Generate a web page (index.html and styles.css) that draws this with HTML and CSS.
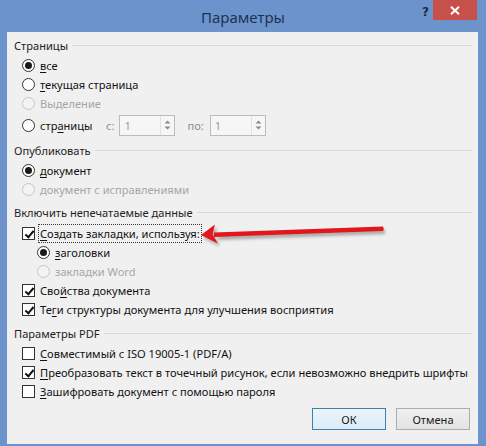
FILE: index.html
```html
<!DOCTYPE html>
<html lang="ru">
<head>
<meta charset="utf-8">
<title>Параметры</title>
<link rel="stylesheet" href="styles.css">
</head>
<body>
<div class="window">
  <div class="titlebar">
    <span class="title">Параметры</span>
    <div class="controls">
      <span class="help">?</span>
      <span class="close"><svg width="10" height="9" viewBox="0 0 10 9"><path d="M1 0.8 L9 8.2 M9 0.8 L1 8.2" stroke="#fff" stroke-width="2" fill="none"/></svg></span>
    </div>
  </div>
  <div class="content">
    <section class="group">
      <div class="group-head"><span>Страницы</span></div>
      <div class="rows">
        <div class="row"><span class="radio on"></span><span><u>в</u>се</span></div>
        <div class="row"><span class="radio"></span><span><u>т</u>екущая страница</span></div>
        <div class="row disabled"><span class="radio"></span><span>Выделение</span></div>
        <div class="row spin-row"><span class="radio"></span><span class="pages-label">стр<u>а</u>ницы</span>
          <span class="spin-label from">с:</span>
          <span class="spin"><span class="val">1</span><span class="arrows"><svg width="7" height="12" viewBox="0 0 7 12"><path d="M0.5 4.5 L3.5 1.5 L6.5 4.5Z M0.5 7.5 L3.5 10.5 L6.5 7.5Z" fill="#8a8a8a"/></svg></span></span>
          <span class="spin-label to">по:</span>
          <span class="spin"><span class="val">1</span><span class="arrows"><svg width="7" height="12" viewBox="0 0 7 12"><path d="M0.5 4.5 L3.5 1.5 L6.5 4.5Z M0.5 7.5 L3.5 10.5 L6.5 7.5Z" fill="#8a8a8a"/></svg></span></span>
        </div>
      </div>
    </section>
    <section class="group g2">
      <div class="group-head"><span>Опубликовать</span></div>
      <div class="rows">
        <div class="row"><span class="radio on"></span><span><u>д</u>окумент</span></div>
        <div class="row disabled"><span class="radio"></span><span>документ с исправлениями</span></div>
      </div>
    </section>
    <section class="group g3">
      <div class="group-head"><span>Включить непечатаемые данные</span></div>
      <div class="rows">
        <div class="row"><span class="check on"></span><span class="focus"><u>С</u>оздать закладки, используя:</span></div>
        <div class="row sub"><span class="radio on"></span><span><u>з</u>аголовки</span></div>
        <div class="row sub disabled"><span class="radio"></span><span>закладки Word</span></div>
        <div class="row"><span class="check on"></span><span>Сво<u>й</u>ства документа</span></div>
        <div class="row"><span class="check on"></span><span>Те<u>г</u>и структуры документа для улучшения восприятия</span></div>
      </div>
    </section>
    <section class="group g4">
      <div class="group-head"><span>Параметры PDF</span></div>
      <div class="rows">
        <div class="row"><span class="check"></span><span><u>С</u>овместимый с ISO 19005-1 (PDF/A)</span></div>
        <div class="row"><span class="check on"></span><span><u>П</u>реобразовать текст в точечный рисунок, если невозможно внедрить шрифты</span></div>
        <div class="row"><span class="check"></span><span><u>З</u>ашифровать документ с помощью пароля</span></div>
      </div>
    </section>
    <div class="buttons">
      <button class="btn default">ОК</button>
      <button class="btn">Отмена</button>
    </div>
  </div>
  <svg class="arrow" width="486" height="446" viewBox="0 0 486 446">
    <defs>
      <filter id="blur" x="-10%" y="-50%" width="120%" height="200%"><feGaussianBlur stdDeviation="1.6"/></filter>
    </defs>
    <g transform="translate(2,3)" fill="#6e6e6e" opacity="0.55" filter="url(#blur)">
      <path d="M383 226.5 L383 231 L216 237 L216 232.5Z"/>
      <path d="M201 235 L215 224.5 L213 234.5 L218 243.5Z"/>
    </g>
    <g fill="#e3161c">
      <path d="M383 226.5 Q384.5 228.7 383 231 L214 237 L214 232.5Z"/>
      <path d="M201 235 L215 224.5 L212.5 234.5 L218 243.5Z"/>
    </g>
  </svg>
</div>
</body>
</html>
```

FILE: styles.css
```css
* { box-sizing: border-box; }
html, body { margin: 0; padding: 0; }
body {
  width: 486px;
  height: 446px;
  overflow: hidden;
  font-family: "Noto Sans", "Open Sans", sans-serif;
  font-size: 11.1px;
  color: #121212;
}
.window {
  position: relative;
  width: 486px;
  height: 446px;
  background: #6d93cd;
  display: flex;
  flex-direction: column;
}
.titlebar {
  height: 32px;
  display: grid;
  grid-template-columns: 1fr auto 1fr;
  align-items: start;
}
.title {
  grid-column: 2;
  font-size: 15px;
  color: #1f3350;
  line-height: 32px;
  padding-top: 1px;
}
.controls {
  grid-column: 3;
  justify-self: end;
  display: flex;
  align-items: flex-start;
  padding-right: 9px;
}
.help {
  font-family: "DejaVu Sans", sans-serif;
  font-weight: bold;
  font-size: 12px;
  color: #1c2c48;
  line-height: 12px;
  margin-top: 6px;
  margin-right: 4px;
}
.close {
  width: 44px;
  height: 20px;
  background: #c7504b;
  display: flex;
  align-items: center;
  justify-content: center;
}
.content {
  flex: 1;
  margin: 0 8px 2px 7px;
  background: #f0f0f0;
  padding: 4px 6px 0 7px;
  display: flex;
  flex-direction: column;
}
.group-head {
  height: 19px;
  display: flex;
  align-items: center;
  color: #1e1e1e;
}
.group-head::after {
  content: "";
  flex: 1;
  height: 1px;
  background: #dadada;
  margin-left: 4px;
  margin-top: -1px;
}
.rows {
  display: flex;
  flex-direction: column;
  margin-top: 1px;
  padding-left: 8px;
}
.g2 { margin-top: 4px; }
.g3 { margin-top: 4px; }
.g3 .rows { margin-top: 2px; }
.g4 { margin-top: 5px; }
.row {
  height: 19px;
  display: flex;
  align-items: center;
  white-space: nowrap;
}
.row u { text-decoration: underline; text-underline-offset: 2px; }
.row.sub { padding-left: 15px; }
.row.disabled { color: #a6a6a6; }
.radio {
  width: 13px;
  height: 13px;
  border-radius: 50%;
  border: 1px solid #333;
  background: #fff;
  margin-right: 5px;
  flex: none;
  display: flex;
  align-items: center;
  justify-content: center;
}
.radio.on::after {
  content: "";
  width: 7px;
  height: 7px;
  border-radius: 50%;
  background: #1a1a1a;
}
.disabled .radio {
  border-color: #c6c6c6;
  background: #f3f3f3;
}
.check {
  width: 13px;
  height: 13px;
  border: 1px solid #333;
  background: #fff;
  margin-right: 5px;
  flex: none;
  position: relative;
}
.check.on::after {
  content: "";
  position: absolute;
  left: 3.5px;
  top: 0.5px;
  width: 3px;
  height: 7px;
  border: solid #111;
  border-width: 0 2px 2px 0;
  transform: rotate(40deg);
}
.focus {
  outline: 1px dotted #333;
  outline-offset: 0;
  padding: 0 1px;
  margin-left: -1px;
  line-height: 17px;
}
.spin-row { height: 24px; }
.pages-label { width: 52px; }
.spin-label { color: #8d8d8d; }
.spin-label.from { margin-left: 14px; margin-right: 5px; }
.spin-label.to { margin-left: 12px; margin-right: 6px; }
.spin {
  width: 56px;
  height: 21px;
  border: 1px solid #bcbcbc;
  background: #f6f6f6;
  display: flex;
  align-items: stretch;
  color: #9a9a9a;
}
.spin .val { flex: 1; padding-left: 4px; line-height: 19px; }
.spin .arrows {
  width: 14px;
  display: flex;
  align-items: center;
  justify-content: center;
  border-left: 1px solid #e2e2e2;
}
.buttons {
  display: flex;
  justify-content: flex-end;
  gap: 10px;
  margin-top: 7px;
  padding-right: 2px;
}
.btn {
  width: 74px;
  height: 22px;
  font: inherit;
  color: #1b1b1b;
  background: linear-gradient(#f0f0f0, #e3e3e3);
  border: 1px solid #acacac;
  padding: 0;
}
.btn.default {
  border-color: #3c7fb1;
  background: linear-gradient(#eaf4fb, #dcecf8);
}
.arrow {
  position: absolute;
  left: 0;
  top: 0;
  pointer-events: none;
}
```
